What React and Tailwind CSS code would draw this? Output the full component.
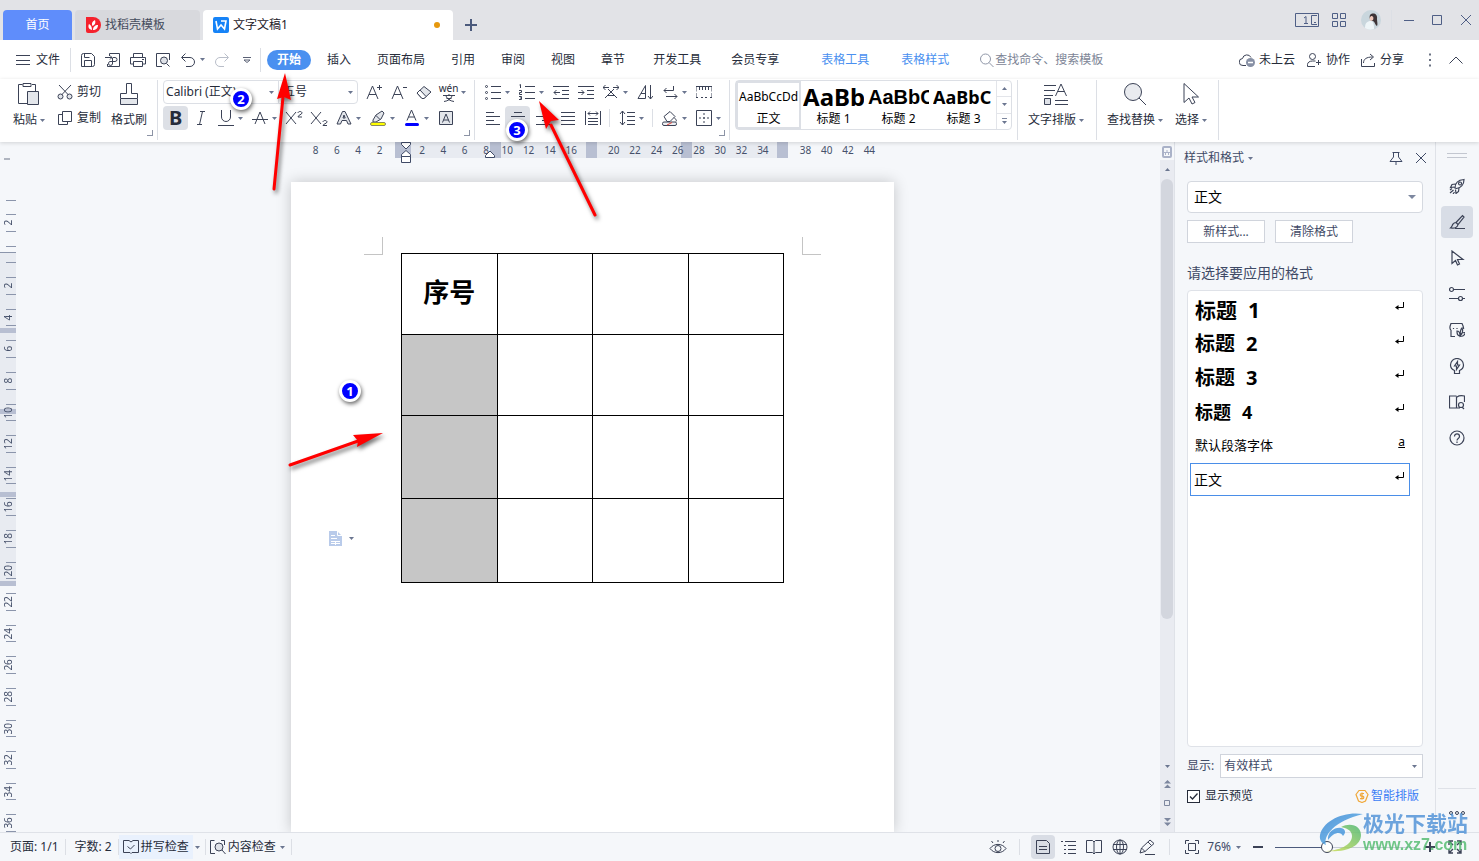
import { useState } from 'react';

const menuTabs = ['插入', '页面布局', '引用', '审阅', '视图', '章节'];
const hNumbers = [8, 6, 4, 2, '', 2, 4, 6, 8, 10, 12, 14, 16, '', 20, 22, 24, 26, 28, 30, 32, 34, '', 38, 40, 42, 44];
const vNumbers = [2, '', 2, 4, 6, 8, 10, 12, 14, 16, 18, 20, 22, 24, 26, 28, 30, 32, 34, 36];

function Ico({ w = 16, h = 16, className = 'text-[#3b4256]', sw = 1, children }) {
  return (
    <svg
      width={w}
      height={h}
      viewBox={`0 0 ${w} ${h}`}
      className={`shrink-0 ${className}`}
      fill="none"
      stroke="currentColor"
      strokeWidth={sw}
      aria-hidden="true"
    >
      {children}
    </svg>
  );
}

function Caret() {
  return (
    <svg width="5" height="3" viewBox="0 0 5 3" className="shrink-0 fill-[#6b7690]" aria-hidden="true">
      <path d="M0 0h5L2.500 3z" />
    </svg>
  );
}

function Sep({ className = 'h-5' }) {
  return <span className={`w-px shrink-0 bg-[#dcdfe5] ${className}`} />;
}

// 25px icon slot, optionally followed by a 9px drop-down slot
function Tool({ label, caret = false, active = false, children }) {
  return (
    <div className="flex h-6 items-center">
      <button
        type="button"
        aria-label={label}
        className={`flex h-6 w-[25px] items-center justify-center rounded-sm ${active ? 'bg-[#dde0e6]' : ''}`}
      >
        {children}
      </button>
      {caret && (
        <button type="button" aria-label={`${label}选项`} className="flex h-6 w-[9px] items-center">
          <Caret />
        </button>
      )}
    </div>
  );
}

function Corner() {
  return <span className="h-[6px] w-[6px] shrink-0 self-end border-r border-b border-[#8c93a5]" />;
}

function TitleBar() {
  return (
    <header className="flex h-10 shrink-0 items-end bg-[#e2e3e7] pl-[3px]">
      <button type="button" className="h-[30px] w-[69px] rounded-t-sm bg-[#5f8dfb] text-white">首页</button>
      <button type="button" className="ml-[3px] flex h-[30px] w-[125px] items-center gap-1 rounded-t-sm bg-[#d8d9dd] pl-[10px] text-[#444b5c]">
        <Ico className="text-white">
          <path d="M1 0h7a8 8 0 0 1 0 16H3a2 2 0 0 1-2-2z" fill="#f5222d" stroke="none" />
          <path d="M7 13C3 12 3 9 4 7c2 1 3 3 3 6zM7.500 9C6 6 8 4 10 3c1 3 0 5-2.500 6zM8 13c0-3 2-5 5-5 0 3-2 5-5 5z" fill="currentColor" stroke="none" />
        </Ico>
        找稻壳模板
      </button>
      <button type="button" className="ml-[3px] flex h-[30px] w-[250px] items-center gap-1 rounded-t-sm bg-white pl-[10px] text-[#1d2129]">
        <Ico>
          <rect width="16" height="16" rx="2" fill="#1683f7" stroke="none" />
          <path d="M3 4l1.500 8L8 8l3.500 4L13 4H8" stroke="#fff" strokeWidth="1.600" />
        </Ico>
        文字文稿1
        <span className="mr-[13px] ml-auto h-[6px] w-[6px] rounded-full bg-[#e6980d]" />
      </button>
      <button type="button" aria-label="新建" className="mb-[9px] ml-3">
        <Ico w={12} h={12} sw={2} className="text-[#4b5a7c]"><path d="M6 0v12M0 6h12" /></Ico>
      </button>
      <div className="mr-2 ml-auto flex h-10 items-center text-[#4f5f86]">
        <button type="button" aria-label="窗口布局" className="flex">
          <Ico w={24} h={14} className="text-[#4f5f86]">
            <path d="M.5.5h23v13H.5zM22 2.500h-5.500v9H22M19 9.500h2M11 3.500v7M9 5l2-1.500M9 10.500h4" />
          </Ico>
        </button>
        <button type="button" aria-label="应用" className="ml-3 flex">
          <Ico className="text-[#4f5f86]"><path d="M1.500 1.500h5v5h-5zM9.500 1.500h5v5h-5zM1.500 9.500h5v5h-5zM9.500 9.500h5v5h-5z" /></Ico>
        </button>
        <button type="button" aria-label="账号" className="ml-[14px] flex">
          <Ico w={20} h={20}>
            <circle cx="10" cy="10" r="10" fill="#c9d6dd" stroke="none" />
            <path d="M9 5c3-3 8-1 7 4 0 3 1 5 0 7-2-1-2-4-4-5-3 0-4-3-3-6z" fill="#3d3437" stroke="none" />
            <path d="M10 6c2 0 3 1 2 4l-2 1c-2-1-2-3 0-5z" fill="#f0c9bb" stroke="none" />
            <path d="M4 18c0-5 2-7 6-7 3 1 3 5 3 8-3 1-6 1-9-1z" fill="#eef5f8" stroke="none" />
          </Ico>
        </button>
        <Sep className="ml-[10px] h-5 bg-[#c5c9d3]" />
        <button type="button" aria-label="最小化" className="ml-3 flex"><Ico w={10} h={10} className="text-[#4f5f86]"><path d="M0 5.500h10" /></Ico></button>
        <button type="button" aria-label="最大化" className="ml-[18px] flex"><Ico w={10} h={10} className="text-[#4f5f86]"><path d="M.5.5h9v9h-9z" /></Ico></button>
        <button type="button" aria-label="关闭" className="ml-[19px] flex"><Ico w={10} h={10} className="text-[#4f5f86]"><path d="M0 0l10 10M10 0L0 10" /></Ico></button>
      </div>
    </header>
  );
}

function MenuRow() {
  return (
    <nav className="flex h-[39px] shrink-0 items-center bg-white pl-4">
      <button type="button" className="flex items-center gap-[6px]">
        <Ico w={14}><path d="M0 3.500h14M0 8.500h14M0 12.500h14" /></Ico>
        文件
      </button>
      <Sep className="ml-[10px] h-6" />
      <div className="ml-1 flex items-center">
        <Tool label="保存">
          <Ico><path d="M1.500 14.500V3.500a2 2 0 0 1 2-2h8l3 3v8a2 2 0 0 1-2 2zM4.500 14V8.500h7V14M4.500 2v3.500h5" /></Ico>
        </Tool>
        <Tool label="输出为PDF">
          <Ico><path d="M4.500 4V1.500h10v13h-12V12M0 5.500h7M5 3.500l2 2-2 2M7.500 12V6M8 5.500h2a2 2 0 0 1 0 4H6a2 2 0 1 0 1.500 2" /></Ico>
        </Tool>
        <Tool label="打印">
          <Ico><path d="M3.500 5V1.500h9V5M3.500 12H.5V5.500h15V12h-3M3.500 9.500h9v5h-9zM12 7.500h2" /></Ico>
        </Tool>
        <Tool label="打印预览">
          <Ico><path d="M7 14.500H1.500v-13h13V8M11.500 11.500l3 3" /><circle cx="9" cy="8.500" r="3.500" fill="#dfe2e8" /></Ico>
        </Tool>
        <Tool label="撤销" caret>
          <Ico><path d="M5.500 1.500l-4 4 4 4M2 5.500h8a4 4 0 0 1 0 9H6" /></Ico>
        </Tool>
        <Tool label="恢复">
          <Ico className="text-[#b9bec9]"><path d="M10.500 1.500l4 4-4 4M14 5.500H6a4 4 0 0 0 0 9h4" /></Ico>
        </Tool>
        <Tool label="自定义快速访问">
          <Ico w={8} h={6} className="text-[#5a6175]"><path d="M0 .5h8M1 3h6L4 5.500z" /></Ico>
        </Tool>
      </div>
      <Sep className="ml-[1px] h-6" />
      <button type="button" className="ml-[6px] h-5 rounded-full bg-[#4a90f0] px-[10px] font-bold text-white">开始</button>
      <div className="ml-[3px] flex items-center">
        {menuTabs.map((tab) => (
          <button key={tab} type="button" className="px-[13px]">{tab}</button>
        ))}
        <button type="button" className="px-[15px]">开发工具</button>
        <button type="button" className="px-[15px]">会员专享</button>
      </div>
      <Sep className="ml-1" />
      <button type="button" className="ml-[22px] text-[#4a90f0]">表格工具</button>
      <button type="button" className="ml-8 text-[#4a90f0]">表格样式</button>
      <label className="ml-[30px] flex min-w-0 items-center">
        <Ico className="text-[#9097a8]"><circle cx="6.500" cy="7" r="5" /><path d="M10 10.500l4.500 4.500" /></Ico>
        <input
          type="text"
          aria-label="查找命令"
          placeholder="查找命令、搜索模板"
          className="w-[120px] bg-transparent outline-none placeholder:text-[#7d8596]"
        />
      </label>
      <div className="mr-4 ml-auto flex shrink-0 items-center">
        <button type="button" className="flex items-center gap-1">
          <Ico w={16}>
            <path d="M7 13.500H4a3.500 3.500 0 0 1-.5-7 4.500 4.500 0 0 1 8.500-1" />
            <circle cx="11.500" cy="10.500" r="4.500" fill="#8790a5" stroke="none" />
            <path d="M9 10.500h5" stroke="#fff" strokeWidth="1.500" />
          </Ico>
          未上云
        </button>
        <button type="button" className="ml-[11px] flex items-center gap-1">
          <Ico><circle cx="6.500" cy="4.500" r="3" /><path d="M9 14.500H1.500v-2c0-2 2-3.500 5-3.500h3M12.500 8v5M10 10.500h5" /></Ico>
          协作
        </button>
        <button type="button" className="ml-[10px] flex items-center gap-1">
          <Ico><path d="M1.500 7v7.500h13V11M3.500 11c0-4 3-6 9-6M10 2l3.500 3L10 8" /></Ico>
          分享
        </button>
        <Sep className="ml-2" />
        <button type="button" aria-label="更多" className="ml-[15px] flex">
          <Ico w={4} h={14} className="text-[#6b7283]"><path d="M1 1.500h2M1 7h2M1 12.500h2" strokeWidth="2" /></Ico>
        </button>
        <button type="button" aria-label="收起功能区" className="ml-[17px] flex">
          <Ico w={14} h={8}><path d="M.5 7.500L7 1l6.500 6.500" /></Ico>
        </button>
      </div>
    </nav>
  );
}

function FontGroup() {
  return (
    <div className="flex shrink-0 flex-col gap-[2px] pl-[5px]">
      <div className="flex items-center">
        <div className="mr-[3px] flex h-6 w-[195px] items-center rounded-sm border border-[#dcdfe5]">
          <label className="flex h-full w-[115px] items-center border-r border-[#dcdfe5] pr-1 pl-[2px]">
            <select aria-label="字体" className="w-full appearance-none bg-transparent outline-none">
              <option>Calibri (正文)</option>
            </select>
            <Caret />
          </label>
          <label className="flex h-full flex-1 items-center pr-1 pl-1">
            <select aria-label="字号" className="w-full appearance-none bg-transparent outline-none">
              <option>五号</option>
            </select>
            <Caret />
          </label>
        </div>
        <Tool label="增大字号"><Ico><path d="M1 15L6.500 2 12 15M3 10.500h7M11 3.500h5M13.500 1v5" /></Ico></Tool>
        <Tool label="减小字号"><Ico><path d="M1 15L6.500 2 12 15M3 10.500h7M12 3.500h4" /></Ico></Tool>
        <Tool label="清除格式">
          <Ico><path d="M1 9l7-6.500L15 8l-7 6.500H6z" fill="#e3e6eb" /><path d="M1 9l3-3 6 6.500-2 2H6z" fill="#fff" /></Ico>
        </Tool>
        <Tool label="拼音指南" caret>
          <span className="flex flex-col items-center">
            <span className="text-[10px] leading-[11px]">wén</span>
            <Ico w={12} h={8}><path d="M0 1.500h12M6 0v1.500M3 2c1 3 4 5 8 5.500M9 2C8 5 5 7 1 7.500M3.500 4.500h5" /></Ico>
          </span>
        </Tool>
      </div>
      <div className="flex items-center">
        <Tool label="加粗" active><span className="text-xl leading-6 font-bold">B</span></Tool>
        <Tool label="倾斜"><Ico><path d="M7 1.500h5M4 14.500h5M9.500 1.500l-3 13" /></Ico></Tool>
        <Tool label="下划线" caret><Ico><path d="M3.500 0v7a4.500 4.500 0 0 0 9 0V0M0 15.500h16" /></Ico></Tool>
        <Tool label="删除线" caret><Ico><path d="M3 14L8 2l5 12M0 9.500h16" /></Ico></Tool>
        <Tool label="上标"><Ico w={18}><path d="M1 2l10 12M11 2L1 14M13 3c0-2 4-2 4 0 0 1.500-4 2-4 4h4" /></Ico></Tool>
        <Tool label="下标"><Ico w={18}><path d="M1 2l10 12M11 2L1 14M13 12c0-2 4-2 4 0 0 1.500-4 2-4 3.500h4" /></Ico></Tool>
        <Tool label="文字效果" caret>
          <Ico><path d="M1 14L6.500 1.500h2.500L15 14h-3l-1.500-3.500H6L4.500 14zM7 8l1-3 1.200 3z" fill="#e3e6eb" /></Ico>
        </Tool>
        <Tool label="突出显示" caret>
          <Ico><path d="M3 10l3-5 6-4 2 2-3 6-5 3H3zM6 5.500l4 4" fill="#e3e6eb" /><rect x=".5" y="12.500" width="15" height="3" rx="1.500" fill="#ffff00" stroke="#8a8a60" /></Ico>
        </Tool>
        <Tool label="字体颜色" caret>
          <Ico><path d="M3 10.500L7.500 0 12 10.500M4.500 7h6" /><rect x="1" y="13" width="14" height="3" rx="1.500" fill="#0000ff" stroke="none" /></Ico>
        </Tool>
        <Tool label="字符底纹"><Ico><path d="M1.500 1.500h13v13h-13z" fill="#e3e6eb" /><path d="M4.500 12.500L8 4l3.500 8.500M5.500 10h5" /></Ico></Tool>
      </div>
    </div>
  );
}

function ParagraphGroup() {
  return (
    <div className="flex shrink-0 flex-col gap-[2px] pl-[5px]">
      <div className="flex items-center">
        <Tool label="项目符号" caret>
          <Ico><path d="M6 2.500h10M6 8.500h10M6 14.500h10" /><circle cx="1.500" cy="2.500" r="1" /><circle cx="1.500" cy="8.500" r="1" /><circle cx="1.500" cy="14.500" r="1" /></Ico>
        </Tool>
        <Tool label="编号" caret>
          <Ico><path d="M6 2.500h10M6 8.500h10M6 14.500h10M.5 1l1-.5V4M0 6.500h2.500v2H.5v2H3M0 12.500h2.500v3H0M1 14h1.500" /></Ico>
        </Tool>
        <Tool label="减少缩进"><Ico><path d="M0 2.500h16M9 6.500h7M9 10.500h7M0 14.500h16M1 8.500h6M3.500 6L1 8.500 3.500 11" /></Ico></Tool>
        <Tool label="增加缩进"><Ico><path d="M0 2.500h16M9 6.500h7M9 10.500h7M0 14.500h16M0 8.500h6M3.500 6L6 8.500 3.500 11" /></Ico></Tool>
        <Tool label="中文版式" caret><Ico><path d="M2 14l9-9M14 14L5 5M5 11.500h6M0 3.500h6M2.500 1L0 3.500 2.500 6M10 3.500h6M13.500 1L16 3.500 13.500 6" /></Ico></Tool>
        <Tool label="排序"><Ico><path d="M13.500 1v14M11 12l2.500 3 2.500-3M1 14.500L8.500 1.500v13zM4 9.500h4.500" /></Ico></Tool>
        <Tool label="显示段落标记" caret><Ico><path d="M11.500 2v4.500H2M4.500 4L2 6.500 4.500 9M4 12.500h11M12.500 10l2.500 2.500-2.500 2.500" /></Ico></Tool>
        <Tool label="制表位"><Ico><path d="M0 7.500v-5h16v5M3.500 3v3M6.500 3v3M9.500 3v3M12.500 3v3M0 9v4.500h2M16 9v4.500h-2M5 13.500h2M9 13.500h2" /></Ico></Tool>
      </div>
      <div className="flex items-center">
        <Tool label="左对齐"><Ico><path d="M1 2.500h8M1 6.500h14M1 10.500h8M1 14.500h14" /></Ico></Tool>
        <Tool label="居中" active><Ico><path d="M4 2.500h8M1 6.500h14M4 10.500h8M1 14.500h14" /></Ico></Tool>
        <Tool label="右对齐"><Ico><path d="M7 2.500h8M1 6.500h14M7 10.500h8M1 14.500h14" /></Ico></Tool>
        <Tool label="两端对齐"><Ico><path d="M1 2.500h14M1 6.500h14M1 10.500h14M1 14.500h14" /></Ico></Tool>
        <Tool label="分散对齐"><Ico><path d="M.5 1v14M15.500 1v14M3 3.500h10M5 1.500l-2 2 2 2M11 1.500l2 2-2 2M3 8.500h10M3 11.500h10M3 14.500h10" /></Ico></Tool>
        <span className="flex w-[9px] justify-center"><Sep className="h-[18px]" /></span>
        <Tool label="行距" caret><Ico><path d="M3.500 1v14M1 4l2.500-3L6 4M1 12l2.500 3L6 12M8 2.500h8M8 6.500h8M8 10.500h8M8 14.500h8" /></Ico></Tool>
        <span className="flex w-[9px] justify-center"><Sep className="h-[18px]" /></span>
        <Tool label="底纹颜色" caret>
          <Ico w={18}><path d="M3 6.500L9 1.500l5 5-5 5H6zM13 7.500c2 2 3 3 2 4" /><rect x="1.500" y="12" width="14" height="3.500" rx="1.500" fill="#eef0f3" /><path d="M6 15l5-2.500" stroke="#e0453a" /></Ico>
        </Tool>
        <Tool label="边框" caret><Ico><path d="M.5.5h15v15H.5z" /><path d="M8 3v10M3 8h10" strokeDasharray="2 2" /></Ico></Tool>
      </div>
    </div>
  );
}

function Gallery() {
  const styles = [
    { name: '标题 1', sample: 'AaBb', cls: 'text-2xl font-["Noto_Sans"]' },
    { name: '标题 2', sample: 'AaBbC', cls: 'text-xl font-["Liberation_Sans"]' },
    { name: '标题 3', sample: 'AaBbC', cls: 'text-lg font-["Noto_Sans"]' },
  ];
  return (
    <div className="ml-[5px] flex h-[50px] shrink-0 rounded-sm border border-[#dcdfe5]">
      <button type="button" className="flex w-[65px] flex-col items-center overflow-hidden border-2 border-[#dcdfe5] text-black">
        <span className="h-7 text-xs leading-7">AaBbCcDd</span>
        <span className="leading-4">正文</span>
      </button>
      {styles.map((s) => (
        <button key={s.name} type="button" className="flex w-[65px] flex-col items-center text-black">
          <span className={`mx-[2px] h-[30px] w-[61px] overflow-hidden text-left leading-8 font-bold ${s.cls}`}>{s.sample}</span>
          <span className="leading-4">{s.name}</span>
        </button>
      ))}
      <div className="flex w-[15px] flex-col divide-y divide-[#e3e5ea] border-l border-[#e3e5ea]">
        <button type="button" aria-label="上一行" className="flex flex-1 items-center justify-center">
          <span className="rotate-180"><Caret /></span>
        </button>
        <button type="button" aria-label="下一行" className="flex flex-1 items-center justify-center"><Caret /></button>
        <button type="button" aria-label="更多样式" className="flex flex-1 flex-col items-center justify-center gap-[2px]">
          <span className="h-px w-[5px] bg-[#7d879f]" />
          <Caret />
        </button>
      </div>
    </div>
  );
}

function BigTool({ icon, label, caret = true, className = '' }) {
  return (
    <button type="button" className={`flex h-[50px] shrink-0 flex-col items-center justify-between ${className}`}>
      <span className="flex h-7 items-center">{icon}</span>
      <span className="flex items-center gap-[3px] leading-5">{label}{caret && <Caret />}</span>
    </button>
  );
}

function Ribbon() {
  return (
    <div className="z-10 flex h-[63px] shrink-0 items-start bg-white pt-px pl-[13px] shadow-[0_1px_4px_rgba(0,0,0,0.15)]">
      <BigTool
        label="粘贴"
        icon={
          <Ico w={22} h={24}><path d="M9 21.500H.5v-19h4M14 2.500h3.500V9" /><path d="M5 1.500h8v3H5z" /><path d="M9.500 9.500h11v13h-11z" fill="#e3e6eb" /></Ico>
        }
      />
      <div className="ml-3 flex shrink-0 flex-col gap-[2px]">
        <button type="button" className="flex h-6 items-center gap-1">
          <Ico><path d="M2 1l9.500 10M14 1L4.500 11" /><circle cx="3.500" cy="12.500" r="2.500" fill="#e3e6eb" /><circle cx="12.500" cy="12.500" r="2.500" fill="#e3e6eb" /></Ico>
          剪切
        </button>
        <button type="button" className="flex h-6 items-center gap-1">
          <Ico><path d="M5.500 1.500h9v10h-9zM5 4.500H1.500v10h9V12" /></Ico>
          复制
        </button>
      </div>
      <BigTool
        className="ml-[10px]"
        caret={false}
        label="格式刷"
        icon={
          <Ico w={18} h={24}><path d="M.5 16.500h17v6H.5z" fill="#e3e6eb" /><path d="M.5 16v-4.500h6V1.500h5v10h6V16" /></Ico>
        }
      />
      <div className="flex h-14"><Corner /></div>
      <Sep className="ml-1 h-[60px]" />
      <FontGroup />
      <div className="-ml-[6px] flex h-14 w-[6px] shrink-0"><Corner /></div>
      <Sep className="ml-1 h-[60px]" />
      <ParagraphGroup />
      <div className="-ml-[6px] flex h-14 w-[6px] shrink-0"><Corner /></div>
      <Sep className="ml-1 h-[60px]" />
      <Gallery />
      <Sep className="ml-[5px] h-[60px]" />
      <BigTool
        className="ml-[10px]"
        label="文字排版"
        icon={
          <Ico w={24} h={24}><path d="M0 3.500h12M0 8.500h11M0 13.500h9M11.500 14L17 2l5.500 12M14 9.500h6M11 18.500h13M11 22.500h13" /><path d="M.5 16.500h6v6h-6z" fill="#dfe2e8" /></Ico>
        }
      />
      <Sep className="ml-3 h-[60px]" />
      <BigTool
        className="ml-[10px]"
        label="查找替换"
        icon={<Ico w={24} h={24}><circle cx="10" cy="10" r="8.500" fill="#e9ebef" /><path d="M16 16l7 7" /></Ico>}
      />
      <BigTool
        className="ml-3"
        label="选择"
        icon={<Ico w={16} h={24}><path d="M1 1.500v19l5-4.500 3 6 3-1.500-3-5.500h6.500z" fill="#fff" /></Ico>}
      />
      <Sep className="ml-[11px] h-[60px]" />
    </div>
  );
}

function HRuler() {
  return (
    <div className="flex h-4 shrink-0 justify-center pl-[25px]">
      <div className="relative grid w-[603px] shrink-0">
        <div className="col-start-1 row-start-1 ml-[104px] flex h-4 w-[393px] bg-[#e8ebf1]">
          <span className="mr-[79px] w-4 bg-[#b8bfd2]" />
          <span className="mr-[85px] w-[11px] bg-[#b8bfd2]" />
          <span className="mr-[84px] w-[11px] bg-[#b8bfd2]" />
          <span className="mr-[85px] w-[11px] bg-[#b8bfd2]" />
          <span className="w-[11px] bg-[#b8bfd2]" />
        </div>
        <div className="z-[1] col-start-1 row-start-1 ml-[14px] grid w-[575px] grid-cols-[repeat(27,minmax(0,1fr))] text-center text-[10px] leading-4 text-[#46516b]">
          {hNumbers.map((n, i) => (
            <span key={i}>{n}</span>
          ))}
        </div>
        <svg width="10" height="22" viewBox="0 0 10 22" className="absolute top-0 left-[110px] z-[2] fill-white stroke-[#3f4a66]">
          <path d="M.5.500h9v2L5 7 .5 2.500zM.5 14.500v-2L5 8.500l4.500 4v2zM.5 14.500h9v6h-9z" />
        </svg>
        <svg width="10" height="8" viewBox="0 0 10 8" className="absolute top-2 left-[194px] z-[2] fill-white stroke-[#3f4a66]">
          <path d="M.5 7.500v-2L5 1l4.500 4.500v2z" />
        </svg>
      </div>
    </div>
  );
}

function VRuler() {
  return (
    <div className="grid h-full w-4 shrink-0 grid-rows-[minmax(0,1fr)] overflow-hidden">
      <div className="col-start-1 row-start-1 mt-[94px] flex h-[334px] flex-col border-t border-[#8b95ab] bg-[#e8ebf1] pt-[75px]">
        <span className="mb-[76px] h-[5px] bg-[#b8bfd2]" />
        <span className="mb-[78px] h-[5px] bg-[#b8bfd2]" />
        <span className="mb-[84px] h-[5px] bg-[#b8bfd2]" />
        <span className="h-[5px] bg-[#b8bfd2]" />
      </div>
      <div className="col-start-1 row-start-1">
        {/* tab stop marker */}
        <div className="flex h-[42px]">
          <span className="-mt-1 ml-1 h-[6px] w-[6px] border-b-2 border-l-2 border-[#b0b5c0]" />
        </div>
        <span className="ml-[6px] block h-px w-[10px] bg-[#8b95ab]" />
        <div className="mt-[6px] grid h-[632px] grid-rows-[repeat(20,minmax(0,1fr))] text-[10px] text-[#46516b]">
          {vNumbers.map((n, i) => (
            <div key={i} className="flex flex-col justify-between py-[7px]">
              <span className="ml-[6px] h-px w-[10px] shrink-0 bg-[#8b95ab]" />
              <span className="flex h-4 w-4 rotate-180 items-center justify-center leading-4 [writing-mode:vertical-rl]">{n}</span>
              <span className="ml-[6px] h-px w-[10px] shrink-0 bg-[#8b95ab]" />
            </div>
          ))}
        </div>
      </div>
    </div>
  );
}

function Page() {
  return (
    <div className="relative mt-6 w-[603px] shrink-0 bg-white pt-[55px] shadow-[0_0_14px_rgba(0,0,0,0.2)]">
      <div className="mr-[73px] ml-[73px] flex h-4 justify-between">
        <span className="h-[18px] w-[19px] border-r border-b border-[#c4c4c4]" />
        <span className="h-[18px] w-[19px] border-b border-l border-[#c4c4c4]" />
      </div>
      <table className="ml-[110px] w-[383px] table-fixed border-collapse text-black">
        <tbody>
          {[81, 81, 83, 84].map((h, row) => (
            <tr key={row} style={{ height: h }}>
              {[0, 1, 2, 3].map((col) => (
                <td
                  key={col}
                  className={`border border-black p-0 pb-1 text-center text-[26px] leading-8 font-semibold ${row > 0 && col === 0 ? 'bg-[#c6c6c6]' : ''}`}
                >
                  {row === 0 && col === 0 ? '序号' : ''}
                </td>
              ))}
            </tr>
          ))}
        </tbody>
      </table>
      <button type="button" aria-label="粘贴选项" className="absolute top-[349px] left-[38px] flex items-center gap-[7px]">
        <Ico w={13} h={15}>
          <path d="M0 0h8l5 5v10H0z" fill="#b9cbea" stroke="none" />
          <path d="M2 4.500h4M2 7.500h6M2 10.500h9M2 12.500h9M8.500 0v4.500H13M6.500 10v4" stroke="#fff" />
        </Ico>
        <Caret />
      </button>
    </div>
  );
}

function ScrollBar() {
  return (
    <div className="flex w-[14px] shrink-0 flex-col items-center">
      <button type="button" aria-label="标尺" className="mt-[4px] flex">
        <Ico w={10} h={12} className="text-[#aab2c8]"><rect x="1" y="1" width="8" height="10" rx="1" strokeWidth="2" /><path d="M2 6.500h6M5 4v3M3.500 7v2M6.500 7v2" /></Ico>
      </button>
      <div className="mt-[2px] flex w-full flex-1 flex-col items-center bg-[#e9ebf1] pt-2">
        <span className="rotate-180"><Caret /></span>
        <div className="mt-2 flex w-full flex-1 flex-col px-px">
          <div className="h-[75%] rounded-full bg-[#d3d6de]" />
        </div>
        <div className="flex flex-col items-center pb-[6px]">
          <Caret />
          <Ico w={7} h={8} className="mt-3 text-[#7d879f]"><path d="M0 3.500L3.500 0 7 3.500zM0 8l3.500-3.500L7 8z" fill="currentColor" stroke="none" /></Ico>
          <Ico w={6} h={6} className="mt-3 text-[#7d879f]"><path d="M.5.500h5v5h-5z" /></Ico>
          <Ico w={7} h={8} className="mt-3 text-[#7d879f]"><path d="M0 0h7L3.500 3.500zM0 4.500h7L3.500 8z" fill="currentColor" stroke="none" /></Ico>
        </div>
      </div>
    </div>
  );
}

function ReturnMark() {
  return (
    <Ico w={10} h={8} className="text-black"><path d="M8.500 0v5.500H2" /><path d="M0 5.500L3.500 3v5z" fill="currentColor" stroke="none" /></Ico>
  );
}

function StylePanel() {
  const [preview, setPreview] = useState(true);
  const headings = [
    { n: 1, cls: 'text-[21px]' },
    { n: 2, cls: 'text-xl' },
    { n: 3, cls: 'text-xl' },
    { n: 4, cls: 'text-lg' },
  ];
  return (
    <aside className="flex w-[262px] shrink-0 flex-col border-x border-[#dfe2e8] pr-3 pl-3 text-[#3f4a66]">
      <div className="-mx-[3px] flex h-8 items-center">
        <button type="button" className="flex items-center gap-1">样式和格式 <Caret /></button>
        <button type="button" aria-label="固定" className="ml-auto flex">
          <Ico w={14} h={14} className="text-[#3f4a66]"><path d="M3.500 1.500h7M4.500 2v4L1 10.500h12L9.500 6V2M7 10.500V14" /></Ico>
        </button>
        <button type="button" aria-label="关闭面板" className="ml-[13px] flex">
          <Ico w={10} h={10} className="text-[#3f4a66]"><path d="M0 0l10 10M10 0L0 10" /></Ico>
        </button>
      </div>
      <label className="mt-[7px] flex h-8 shrink-0 items-center rounded-sm border border-[#d5d9e0] bg-white px-[6px]">
        <select aria-label="当前样式" className="w-full appearance-none bg-transparent text-sm text-black outline-none">
          <option>正文</option>
        </select>
        <Ico w={8} h={4} className="text-[#7d879f]"><path d="M0 0h8L4 4z" fill="currentColor" stroke="none" /></Ico>
      </label>
      <div className="mt-[7px] flex gap-[10px]">
        <button type="button" className="h-[23px] w-[78px] border border-[#d0d4dc] bg-white">新样式...</button>
        <button type="button" className="h-[23px] w-[78px] border border-[#d0d4dc] bg-white">清除格式</button>
      </div>
      <p className="mt-5 text-sm leading-5">请选择要应用的格式</p>
      <ul className="mt-[7px] flex min-h-0 flex-1 flex-col rounded-sm border border-[#dfe2e8] bg-white pt-[2px] pr-3 pl-[2px] text-black">
        {headings.map((h) => (
          <li key={h.n} className="flex h-[34px] shrink-0 items-center justify-between pr-[5px] pl-[5px]">
            <span className={`flex gap-[11px] font-bold ${h.cls}`}><span>标题</span><span>{h.n}</span></span>
            <span className="mb-2"><ReturnMark /></span>
          </li>
        ))}
        <li className="flex h-[34px] shrink-0 items-center justify-between pr-[5px] pl-[5px] text-[13px]">
          默认段落字体 <span className="mb-2 text-xs leading-3 underline">a</span>
        </li>
        <li className="flex h-[33px] shrink-0 items-center justify-between border border-[#4a8ee8] pr-1 pl-[3px] text-sm">
          正文 <span className="mb-2"><ReturnMark /></span>
        </li>
      </ul>
      <label className="mt-[7px] flex items-center gap-[6px]">
        显示:
        <span className="flex h-6 flex-1 items-center border border-[#d0d4dc] bg-white pr-[5px] pl-[3px]">
          <select className="w-full appearance-none bg-transparent outline-none">
            <option>有效样式</option>
          </select>
          <Caret />
        </span>
      </label>
      <div className="mt-[10px] mb-7 flex items-center justify-between">
        <label className="flex items-center gap-[5px] text-[#262c3a]">
          <span className="grid">
            <input
              type="checkbox"
              checked={preview}
              onChange={(e) => setPreview(e.target.checked)}
              className="peer col-start-1 row-start-1 h-[13px] w-[13px] appearance-none border border-[#262c3a] bg-white"
            />
            <Ico w={13} h={13} sw={1.3} className="pointer-events-none invisible col-start-1 row-start-1 text-[#262c3a] peer-checked:visible"><path d="M3 6.500L5.500 9l5-5.500" /></Ico>
          </span>
          显示预览
        </label>
        <a href="#smart" className="mr-1 flex items-center gap-[2px] text-[#3b7df5]">
          <Ico w={14} h={14} sw={1.2} className="text-[#f0a83a]"><path d="M4 1.500h6l3 4L10.500 12 7 13.500 3.500 12 1 5.500zM9 4.500H6.500a1.300 1.300 0 0 0 0 2.600h1a1.300 1.300 0 0 1 0 2.600H5M7 3.500v7" /></Ico>
          智能排版
        </a>
      </div>
    </aside>
  );
}

const sideTools = [
  { label: '推荐', d: 'M6 10C6 5 9 2 15 1.500c0 5-3 8.500-7.500 9zM6.500 6L3 6.500 1.500 9.500 5.500 9M10 10l-.5 3.500-2.500 2-.5-4M1 12l2-1.500M1 15l3.500-3M4 16l1.500-2M11 4a1.500 1.500 0 1 0 .1 0' },
  { label: '样式', active: true, d: 'M7 8.500L13.500 1.500l1.500 1.500L9 10.500zM7 8.500c-3 0-3.500 2-4 3.500-.5 1-1 1.500-1.500 2 4 .5 7 0 7.500-3.500M6 14.500h10' },
  { label: '选择', d: 'M3 1v12.500l3.500-3 2 4.500 2-1-2-4.500H14z' },
  { label: '属性', d: 'M4.500 3.500H16M0 12.500h9.500M14 12.500h2M.5 3.500a2 2 0 1 0 4 0 2 2 0 1 0-4 0M9.500 12.500a2 2 0 1 0 4 0 2 2 0 1 0-4 0' },
  { label: '稻壳资源', d: 'M2 8v6.500h4M2 8C.5 7 .5 5 2 1.500h11c1.500 3 2 4 1.500 5.500M4.500 6v1M8 6v1M11 14c-3 0-3-3-3-5 2 0 3 2 3 5zM11 14c0-4 0-6 2-8 1 2 1 5-2 8zM11 14.500c0-3 2-4 5-4 0 3-2 4-5 4z' },
  { label: '灵感', d: 'M5.500 12.500C3 11.500 1.500 10 1.500 7a6.500 6.500 0 0 1 13 0c0 3-1.500 4.500-4 5.500v3h-5zM8.500 3.500L5.500 8h2v3.500l3-4.500h-2z' },
  { label: '查阅', d: 'M7.500 14H.5V2h7M7.500 2.500v12M8 3c2-1.500 5-1.500 7.500-1v6M15 15l-2-2M11 14H8M9.500 11a2.500 2.500 0 1 0 5 0 2.500 2.500 0 1 0-5 0' },
  { label: '帮助', d: 'M1 8a7 7 0 1 0 14 0A7 7 0 1 0 1 8M5.500 6.500c0-3.500 5-3.500 5 0 0 2-2.500 2-2.500 4M8 11.500V13' },
];

function SideBar() {
  return (
    <div className="flex w-[43px] shrink-0 flex-col items-center pr-[2px]">
      <span className="mt-[11px] h-[5px] w-5 border-y border-[#c3c7d0]" />
      <div className="mt-3 flex flex-col gap-1">
        {sideTools.map((t) => (
          <button
            key={t.label}
            type="button"
            aria-label={t.label}
            className={`flex h-8 w-8 items-center justify-center rounded-sm ${t.active ? 'bg-[#d8dde6]' : ''}`}
          >
            <Ico sw={1.2}><path d={t.d} /></Ico>
          </button>
        ))}
      </div>
      <span className="mt-auto h-px w-[38px] bg-[#dfe2e8]" />
      <button type="button" aria-label="更多工具" className="mt-[21px] mb-4 flex">
        <Ico h={6}><circle cx="2" cy="3" r="1.500" /><circle cx="8" cy="3" r="1.500" /><circle cx="14" cy="3" r="1.500" /></Ico>
      </button>
    </div>
  );
}

function StatusBar() {
  return (
    <footer className="flex h-[29px] shrink-0 items-center border-t border-[#dfe2e8] bg-[#f5f7fa] pl-[10px]">
      <span>页面: 1/1</span>
      <Sep className="ml-[6px] h-4" />
      <span className="ml-[9px]">字数: 2</span>
      <Sep className="ml-[6px] h-4" />
      <button type="button" className="flex h-6 items-center gap-[2px] bg-[#e9f1fd] px-1">
        <Ico><path d="M7 13.500H.5v-12H6l2 1.500 2-1.500h5.500v12H9l-1 1-1-1M4.500 7.500l3 2.500 4-4" /></Ico>
        拼写检查
      </button>
      <span className="ml-[2px]"><Caret /></span>
      <Sep className="ml-[5px] h-4" />
      <button type="button" className="ml-1 flex h-6 items-center gap-[2px]">
        <Ico><path d="M5 14.500H.5v-13h4M11 1.500h3.500V6" /><circle cx="9" cy="8" r="4" fill="#dfe2e8" /><path d="M12 11l3.500 4" /></Ico>
        内容检查
      </button>
      <span className="ml-1"><Caret /></span>
      <Sep className="ml-[6px] h-4" />
      <div className="mr-[17px] ml-auto flex items-center">
        <button type="button" aria-label="护眼模式" className="flex">
          <Ico w={18}><path d="M1 9.500C5 4 13 4 17 9.500 13 15 5 15 1 9.500zM9 3V1M4 4L2.500 2M14 4l1.500-2" /><circle cx="9" cy="9.500" r="3" /></Ico>
        </button>
        <Sep className="ml-[12px] h-4" />
        <button type="button" aria-label="页面视图" className="ml-[11px] flex h-6 w-6 items-center justify-center rounded-sm bg-[#d9dde5]">
          <Ico w={14}><path d="M.5 1.500h10l3 3v10H.5zM3 7.500h8M3 10.500h8" /></Ico>
        </button>
        <button type="button" aria-label="大纲视图" className="ml-[6px] flex">
          <Ico><path d="M0 2.500h2M4 2.500h11M3 6.500h2M7 6.500h8M3 10.500h2M7 10.500h8M3 14.500h2M7 14.500h8" /></Ico>
        </button>
        <button type="button" aria-label="阅读版式" className="ml-[9px] flex">
          <Ico><path d="M8 3v12M8 3L6.500 1.500h-6v12h6L8 15l1.500-1.500h6v-12h-6z" /></Ico>
        </button>
        <button type="button" aria-label="Web版式" className="ml-[10px] flex">
          <Ico><circle cx="8" cy="8" r="7" /><ellipse cx="8" cy="8" rx="3.500" ry="7" /><path d="M1 5.500h14M1 10.500h14M8 1v14" /></Ico>
        </button>
        <button type="button" aria-label="写作模式" className="ml-[11px] flex">
          <Ico><path d="M1 14l1.500-5L11 1l4 3.500L6 12.500zM9 3l3.500 3.500M2.500 9L6 12.500M6 15.500h10" /></Ico>
        </button>
        <Sep className="ml-[14px] h-4" />
        <button type="button" aria-label="适合页面" className="ml-[15px] flex">
          <Ico w={14} h={14}><path d="M.5 4V.5H4M10 .5h3.500V4M13.500 10v3.500H10M4 13.500H.5V10M3.500 3.500h7v7h-7z" /></Ico>
        </button>
        <button type="button" className="ml-2 flex items-center gap-[5px] text-[#3f4a66]">76% <Caret /></button>
        <button type="button" aria-label="缩小" className="ml-3 flex"><Ico w={10} h={10} sw={2}><path d="M0 5h10" /></Ico></button>
        <input
          type="range"
          aria-label="缩放"
          min="0"
          max="100"
          defaultValue="36"
          className="ml-3 h-3 w-[140px] appearance-none bg-[linear-gradient(to_right,#4b5a7c_36%,#c6cbd6_36%)] bg-[length:100%_1px] bg-center bg-no-repeat [&::-webkit-slider-thumb]:h-3 [&::-webkit-slider-thumb]:w-3 [&::-webkit-slider-thumb]:appearance-none [&::-webkit-slider-thumb]:rounded-full [&::-webkit-slider-thumb]:border [&::-webkit-slider-thumb]:border-[#3b4256] [&::-webkit-slider-thumb]:bg-white"
        />
        <button type="button" aria-label="放大" className="ml-[10px] flex"><Ico w={10} h={10} sw={2}><path d="M0 5h10M5 0v10" /></Ico></button>
        <button type="button" aria-label="全屏" className="ml-[13px] flex">
          <Ico w={14} h={14} sw={1.4}><path d="M1 5V1h4M9 1h4v4M13 9v4H9M5 13H1V9M1 1l4 4M13 1L9 5M13 13L9 9M1 13l4-4" /></Ico>
        </button>
      </div>
    </footer>
  );
}

function Badge({ n, className }) {
  return (
    <span className={`pointer-events-none absolute z-30 flex h-[22px] w-[22px] items-center justify-center rounded-full border-[3px] border-white bg-[#0000ff] text-[13px] leading-none font-bold text-white shadow-[1px_2px_4px_rgba(0,0,0,0.6)] ${className}`}>
      {n}
    </span>
  );
}

function Arrow({ w, h, line, head, className }) {
  return (
    <svg width={w} height={h} viewBox={`0 0 ${w} ${h}`} className={`pointer-events-none absolute z-20 overflow-visible drop-shadow-[2px_3px_2px_rgba(0,0,0,0.55)] ${className}`} aria-hidden="true">
      <path d={line} stroke="#ff0000" strokeWidth="3" strokeLinecap="round" />
      <path d={head} fill="#ff0000" />
    </svg>
  );
}

function Watermark() {
  return (
    <div className="pointer-events-none absolute right-[11px] bottom-[6px] z-20 flex items-center opacity-80">
      <svg width="44" height="44" viewBox="0 0 44 44" aria-hidden="true">
        <defs>
          <linearGradient id="swirl" x1="0" y1="0" x2="1" y2="1">
            <stop offset="0" stopColor="#2f7fd0" />
            <stop offset="1" stopColor="#5fb8ee" />
          </linearGradient>
          <linearGradient id="leaf" x1="1" y1="0" x2="0" y2="1">
            <stop offset="0" stopColor="#43b36a" />
            <stop offset="1" stopColor="#d5e04b" />
          </linearGradient>
        </defs>
        <path d="M44 3C24 0 4 10 1 24c-1 6 3 9 6 10-3-9 8-24 37-31z" fill="url(#swirl)" />
        <path d="M22 16c10-5 20-1 20 8 0 11-14 18-37 16 15 0 28-6 28-15 0-6-6-8-11-9z" fill="url(#leaf)" />
        <path d="M9 29c-1-8 7-13 13-12 5 1 5 5 2 8-2-4-8-5-15 4z" fill="#3f93dc" />
      </svg>
      <div className="flex flex-col items-start">
        <span className="text-[21px] leading-6 font-bold text-[#4a8fd6]">极光下载站</span>
        <span className='font-["Liberation_Sans"] text-base leading-5 font-bold text-[#4fba6c]'>www.xz7.com</span>
      </div>
    </div>
  );
}

export default function App() {
  return (
    <div className='relative flex h-screen flex-col overflow-hidden bg-[#f5f7fa] font-["Noto_Sans","Noto_Sans_CJK_SC",sans-serif] text-xs text-[#262c3a]'>
      <TitleBar />
      <MenuRow />
      <Ribbon />
      <main className="flex min-h-0 flex-1">
        <section className="flex min-w-0 flex-1 flex-col">
          <HRuler />
          <div className="flex min-h-0 flex-1">
            <VRuler />
            <div className="flex min-w-0 flex-1 justify-center overflow-hidden pl-[9px]">
              <Page />
            </div>
          </div>
        </section>
        <ScrollBar />
        <StylePanel />
        <SideBar />
      </main>
      <StatusBar />

      {/* Step markers and arrows */}
      <Badge n={1} className="top-[380px] left-[339px]" />
      <Badge n={2} className="top-[88px] left-[230px]" />
      <Badge n={3} className="top-[119px] left-[506px]" />
      <Arrow w={20} h={118} className="top-[73px] left-[272px]" line="M2 116L11 24" head="M13 0l6 27-7-3-7 2z" />
      <Arrow w={58} h={116} className="top-[101px] left-[539px]" line="M56 114L12 24" head="M0 0l20 19-8 1-5 8z" />
      <Arrow w={94} h={36} className="top-[431px] left-[289px]" line="M1 34L72 9" head="M94 2L68 16l1-6-5-6z" />
      <Watermark />
    </div>
  );
}
